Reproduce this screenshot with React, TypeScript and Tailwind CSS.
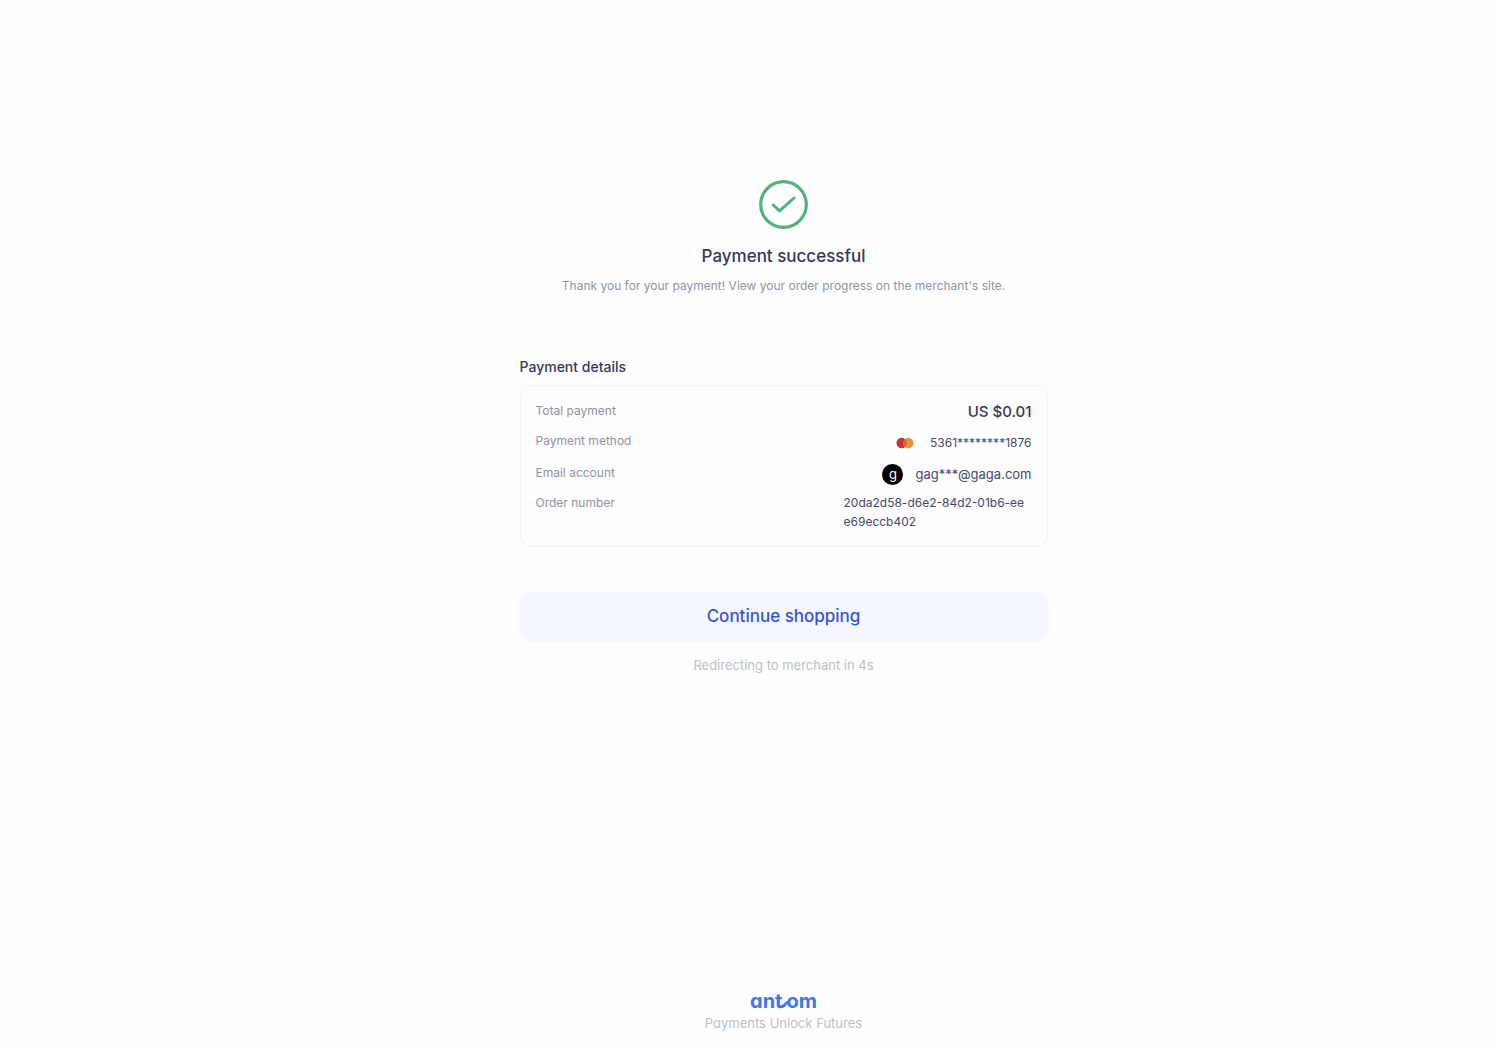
import type { ReactNode } from "react";

function CheckIcon() {
  return (
    <svg width="50" height="50" viewBox="0 0 50 50" fill="none" aria-hidden="true">
      <circle cx="24.5" cy="24.5" r="22.8" stroke="#52b27c" strokeWidth="3.2" />
      <path
        d="M14.2 25 20.6 30.8 35 18"
        stroke="#52b27c"
        strokeWidth="3"
        strokeLinecap="round"
        strokeLinejoin="round"
      />
    </svg>
  );
}

function MastercardIcon() {
  return (
    <svg width="18" height="12" viewBox="0 0 18 12" aria-hidden="true">
      <circle cx="5.7" cy="6" r="5.2" fill="#cf3038" />
      <circle cx="12.3" cy="6" r="5.2" fill="#e8963a" />
      <path d="M9 2a5.2 5.2 0 0 1 0 8 5.2 5.2 0 0 1 0-8Z" fill="#dd6231" />
    </svg>
  );
}

function AntomLogo() {
  return (
    <span className="flex items-center text-xl leading-6 font-bold text-[#3e76f6]">
      ant
      {/* swoosh joining the two halves */}
      <svg
        className="-mx-1 overflow-visible"
        width="12"
        height="24"
        viewBox="0 0 12 24"
        fill="none"
        aria-hidden="true"
      >
        <path
          d="M1.5 17.7C5 18.2 6.5 16.4 9.5 13.2"
          stroke="currentColor"
          strokeWidth="2.8"
          strokeLinecap="round"
        />
      </svg>
      om
    </span>
  );
}

function Row({ label, children }: { label: string; children: ReactNode }) {
  return (
    <div className="flex items-start justify-between">
      <dt className="text-xs leading-5 text-[#8f94a6]">{label}</dt>
      <dd className="flex items-center text-[#45496a]">{children}</dd>
    </div>
  );
}

function App() {
  return (
    <div className="flex min-h-screen flex-col items-center bg-[#fefefe] pt-[180px] pb-4 pl-[67px] font-['Inter',sans-serif]">
      <main className="flex w-full max-w-[528px] flex-col">
        {/* status */}
        <div className="flex flex-col items-center text-center">
          <CheckIcon />
          <h1 className="mt-3 text-[17px] leading-7 font-medium text-[#34385a]">
            Payment successful
          </h1>
          <p className="mt-1.5 text-xs leading-5 text-[#8f94a6]">
            Thank you for your payment! View your order progress on the
            merchant's site.
          </p>
        </div>

        {/* details */}
        <h2 className="mt-[61px] text-sm leading-5 font-medium text-[#34385a]">
          Payment details
        </h2>
        <dl className="mt-2 flex flex-col gap-2 rounded-xl border border-[#f4f4f5] bg-[#fdfdfd] p-[15px]">
          <Row label="Total payment">
            <span className="text-[15px] leading-[22px] font-medium text-[#34385a]">
              US $0.01
            </span>
          </Row>
          <Row label="Payment method">
            <MastercardIcon />
            <span className="ml-4 text-xs leading-6">5361********1876</span>
          </Row>
          <Row label="Email account">
            <span className="flex size-[21px] items-center justify-center rounded-full bg-black text-[13px] leading-none text-white">
              g
            </span>
            <span className="ml-3 text-[13px] leading-[22px]">
              gag***@gaga.com
            </span>
          </Row>
          <Row label="Order number">
            <span className="w-[188px] pr-1 text-xs leading-[19px] break-all">
              20da2d58-d6e2-84d2-01b6-eee69eccb402
            </span>
          </Row>
        </dl>

        <button
          type="button"
          className="mt-[46px] h-12 rounded-xl bg-[#f4f7ff] text-[17px] font-medium text-[#3454dc] shadow-[0_0_4px_#f4f7ff]"
        >
          Continue shopping
        </button>
        <p className="mt-[14px] text-center text-[13px] leading-5 text-[#bcc0c6]">
          Redirecting to merchant in 4s
        </p>
      </main>

      {/* footer */}
      <footer className="mt-auto flex flex-col items-center [font-feature-settings:'cv11']">
        <AntomLogo />
        <span className="text-[13px] leading-5 text-[#bcc0c6]">
          Payments Unlock Futures
        </span>
      </footer>
    </div>
  );
}

export default App;
